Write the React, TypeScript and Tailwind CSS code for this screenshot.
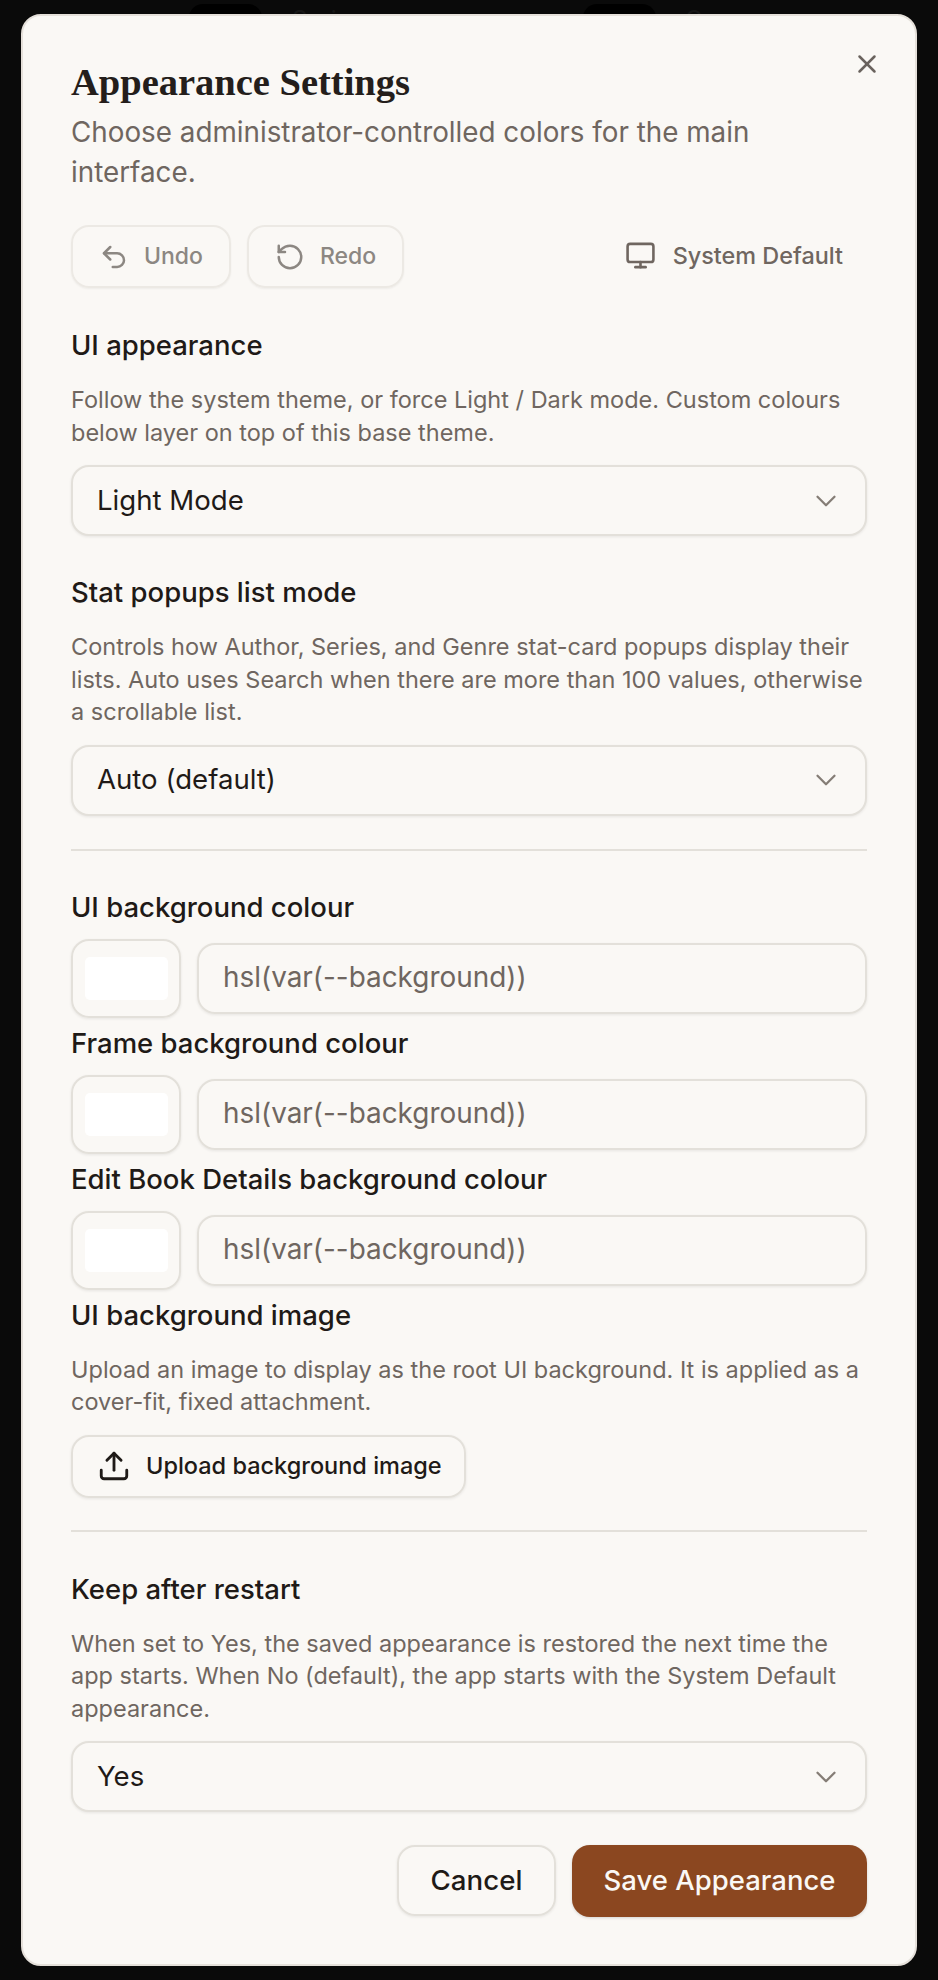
import { Undo2, RotateCcw, Monitor, X, ChevronDown, Upload } from "lucide-react";

function Sel({ value }: { value: string }) {
  return (
    <div className="flex h-[71px] w-full items-center justify-between rounded-[18px] border-2 border-[#e3e0da] bg-[#faf8f5] pl-[24px] pr-[22px] text-[27.6px] text-[#1f1a17] shadow-[0_1px_3px_rgba(0,0,0,0.08)]">
      <span>{value}</span>
      <ChevronDown size={34} strokeWidth={1.6} className="text-[#857d76]" />
    </div>
  );
}

function Colour({ label }: { label: string }) {
  return (
    <div>
      <div className="text-[27.5px] font-medium leading-[34px] text-[#1f1a17]">{label}</div>
      <div className="mt-[15px] flex items-center gap-[16px]">
        <div className="flex h-[79px] w-[110px] shrink-0 items-center justify-center rounded-[18px] border-2 border-[#e3e0da] shadow-[0_1px_3px_rgba(0,0,0,0.08)]">
          <div className="h-[43px] w-[83px] rounded-[5px] bg-white" />
        </div>
        <div className="flex h-[71px] flex-1 items-center rounded-[18px] border-2 border-[#e3e0da] pl-[24px] text-[27.9px] text-[#6f6660] shadow-[0_1px_3px_rgba(0,0,0,0.08)]">
          hsl(var(--background))
        </div>
      </div>
    </div>
  );
}

function Label({ children, className }: { children: string; className: string }) {
  return <div className={`text-[27.5px] font-medium leading-[34px] text-[#1f1a17] ${className}`}>{children}</div>;
}

function Hint({ children }: { children: string }) {
  return <p className="mt-[22px] text-[23.5px] leading-[32.5px] text-[#6f6660]">{children}</p>;
}

export default function App() {
  return (
    <div className="relative h-[1980px] w-[938px] overflow-hidden bg-[#0a0a0a] pl-[21px] pt-[14px]" style={{ fontFamily: '"Inter", "Noto Sans", sans-serif' }}>
      <div className="absolute left-[189px] top-[4px] h-[40px] w-[73px] rounded-[14px] bg-black" />
      <div className="absolute left-[583px] top-[4px] h-[40px] w-[73px] rounded-[14px] bg-black" />
      <div className="absolute left-[292px] top-[2px] text-[24px] text-[#161616]">Series</div>
      <div className="absolute left-[685px] top-[2px] text-[24px] text-[#161616]">Genre</div>
      <div className="relative h-[1952px] w-[896px] rounded-[20px] border-2 border-[#e5e0da] bg-[#faf8f5] px-[48px] pt-[44px]">
        <button className="absolute right-[33px] top-[33px] text-[#6a635e]">
          <X size={30} strokeWidth={2} />
        </button>
        <h2 className="text-[38.5px] font-bold leading-[44px] text-[#241e1b]" style={{ fontFamily: '"Liberation Serif", serif' }}>
          Appearance Settings
        </h2>
        <p className="mt-[9px] w-[720px] text-[27.8px] leading-[39.5px] text-[#6f6660]">
          Choose administrator-controlled colors for the main interface.
        </p>

        <div className="mt-[33px] flex items-center gap-[16px]">
          <div className="flex h-[63px] w-[160px] items-center justify-center gap-[15px] rounded-[18px] border-2 border-[#ece9e4] text-[23px] font-medium text-[#8c8782] shadow-[0_1px_2px_rgba(0,0,0,0.05)]">
            <Undo2 size={30} strokeWidth={2} />
            Undo
          </div>
          <div className="flex h-[63px] w-[157px] items-center justify-center gap-[15px] rounded-[18px] border-2 border-[#ece9e4] text-[23px] font-medium text-[#8c8782] shadow-[0_1px_2px_rgba(0,0,0,0.05)]">
            <RotateCcw size={30} strokeWidth={2} />
            Redo
          </div>
          <div className="ml-auto mr-[24px] -mt-[2px] flex items-center gap-[17px] text-[23.4px] font-medium text-[#6f6660]">
            <Monitor size={31} strokeWidth={2} />
            System Default
          </div>
        </div>

        <Label className="mt-[40px]">UI appearance</Label>
        <Hint>Follow the system theme, or force Light / Dark mode. Custom colours below layer on top of this base theme.</Hint>
        <div className="mt-[16px]"><Sel value="Light Mode" /></div>

        <Label className="mt-[39px]">Stat popups list mode</Label>
        <Hint>Controls how Author, Series, and Genre stat-card popups display their lists. Auto uses Search when there are more than 100 values, otherwise a scrollable list.</Hint>
        <div className="mt-[16px]"><Sel value="Auto (default)" /></div>

        <div className="mt-[33px] h-[2px] bg-[#e3e0da]" />

        <div className="mt-[39px] flex flex-col gap-[8px]">
          <Colour label="UI background colour" />
          <Colour label="Frame background colour" />
          <Colour label="Edit Book Details background colour" />
        </div>

        <Label className="mt-[8px]">UI background image</Label>
        <Hint>Upload an image to display as the root UI background. It is applied as a cover-fit, fixed attachment.</Hint>
        <div className="mt-[16px] flex h-[63px] w-[395px] items-center gap-[15px] rounded-[18px] border-2 border-[#e3e0da] pl-[24px] text-[23.5px] font-medium text-[#1f1a17] shadow-[0_1px_3px_rgba(0,0,0,0.08)]">
          <Upload size={34} strokeWidth={2} />
          Upload background image
        </div>

        <div className="mt-[32px] h-[2px] bg-[#e3e0da]" />

        <Label className="mt-[40px]">Keep after restart</Label>
        <Hint>When set to Yes, the saved appearance is restored the next time the app starts. When No (default), the app starts with the System Default appearance.</Hint>
        <div className="mt-[16px]"><Sel value="Yes" /></div>

        <div className="mt-[33px] flex justify-end gap-[16px]">
          <div className="flex h-[71px] w-[159px] items-center justify-center rounded-[18px] border-2 border-[#e3e0da] text-[27.7px] font-medium text-[#1f1a17] shadow-[0_1px_3px_rgba(0,0,0,0.08)]">
            Cancel
          </div>
          <div className="flex h-[72px] w-[295px] items-center justify-center rounded-[18px] bg-[#8b4720] text-[27.5px] font-medium text-[#faf8f5] shadow-[0_1px_3px_rgba(0,0,0,0.15)]">
            Save Appearance
          </div>
        </div>
      </div>
    </div>
  );
}
